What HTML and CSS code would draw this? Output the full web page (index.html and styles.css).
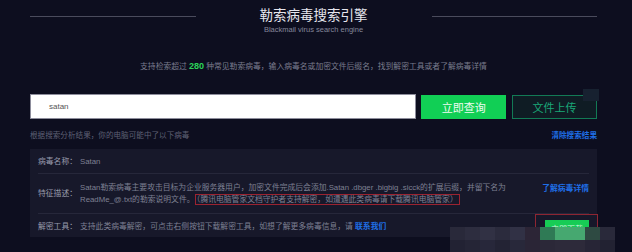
FILE: index.html
```html
<!DOCTYPE html>
<html lang="zh-CN">
<head>
    <meta charset="UTF-8">
    <title>勒索病毒搜索引擎</title>
    <link rel="stylesheet" href="styles.css">
</head>
<body>
    <div class="page">
        <div class="header">
            <div class="header-line"></div>
            <div class="header-title">
                <h1>勒索病毒搜索引擎</h1>
                <div class="subtitle">Blackmail virus search engine</div>
            </div>
            <div class="header-line"></div>
        </div>

        <p class="tagline">支持检索超过 <b class="count">280</b> 种常见勒索病毒，输入病毒名或加密文件后缀名，找到解密工具或者了解病毒详情</p>

        <div class="search-row">
            <div class="search-input">satan</div>
            <button class="btn btn-search">立即查询</button>
            <button class="btn btn-upload">文件上传<span class="corner"></span></button>
        </div>

        <div class="hint-row">
            <span>根据搜索分析结果，你的电脑可能中了以下病毒</span>
            <a class="link">清除搜索结果</a>
        </div>

        <div class="result">
            <div class="result-row">
                <span class="label">病毒名称：</span>
                <span class="value">Satan</span>
            </div>
            <div class="result-row row-desc">
                <span class="label">特征描述：</span>
                <span class="value desc">Satan勒索病毒主要攻击目标为企业服务器用户，加密文件完成后会添加.Satan .dbger .bigbig .sicck的扩展后缀，并留下名为ReadMe_@.txt的勒索说明文件。<span class="mark">（腾讯电脑管家文档守护者支持解密，如遭遇此类病毒请下载腾讯电脑管家）</span></span>
                <a class="link detail-link">了解病毒详情</a>
            </div>
            <div class="result-row row-tool">
                <span class="label">解密工具：</span>
                <span class="value">支持此类病毒解密，可点击右侧按钮下载解密工具，如想了解更多病毒信息，请 <a class="link">联系我们</a></span>
                <div class="download-box"><div class="btn-download">立即下载</div></div>
            </div>
        </div>
    </div>

    <div class="mosaic">
        <i style="background:#29293a"></i><i style="background:#2d2d3f"></i><i style="background:#313144"></i><i style="background:#2b2b3d"></i><i style="background:#313145"></i><i style="background:#2c2536"></i><i style="background:#2f7a55"></i><i style="background:#46a870"></i><i style="background:#46a870"></i><i style="background:#2e4a42"></i><i style="background:#29293a"></i>
        <i style="background:#222233"></i><i style="background:#252536"></i><i style="background:#27273a"></i><i style="background:#232334"></i><i style="background:#28283a"></i><i style="background:#2a2536"></i><i style="background:#2b2838"></i><i style="background:#2d2a3a"></i><i style="background:#2d2a3a"></i><i style="background:#272536"></i><i style="background:#222232"></i>
    </div>
</body>
</html>
```

FILE: styles.css
```css
body {
    margin: 0;
    background-color: #0d0e1f;
    font-family: 'Liberation Sans', 'Noto Sans CJK SC', sans-serif;
    color: #7c7e90;
    position: relative;
    width: 632px;
    height: 252px;
    overflow: hidden;
}
.page {
    width: 567px;
    padding: 0 35px 0 30px;
}
.header {
    display: flex;
    align-items: flex-start;
    padding-top: 7px;
}
.header-line {
    flex: 1;
    height: 1px;
    background-color: #4a4b5c;
    margin-top: 9px;
}
.header-title {
    width: 110px;
    margin: 0 63px;
    text-align: center;
}
h1 {
    margin: 0;
    font-size: 13.5px;
    line-height: 18px;
    font-weight: normal;
    color: #e6e6ee;
}
.subtitle {
    font-size: 7.5px;
    line-height: 10px;
    color: #85879a;
}
.tagline {
    margin: 25px 0 0;
    text-align: center;
    font-size: 7.8px;
    line-height: 12px;
    color: #7a7c8e;
}
.count {
    color: #2bd45a;
    font-size: 9px;
}
.search-row {
    display: flex;
    margin-top: 21px;
    height: 25px;
}
.search-input {
    width: 367px;
    padding-left: 18px;
    background-color: #fff;
    border: 1px solid #8d8d9c;
    font-size: 8px;
    line-height: 23px;
    color: #555;
}
.btn {
    font-family: inherit;
    border: none;
    padding: 0;
    cursor: pointer;
}
.btn-search {
    width: 85px;
    margin-left: 5px;
    margin-top: 1px;
    height: 24px;
    background-color: #11cf55;
    color: #eefbf1;
    font-size: 11px;
}
.btn-upload {
    position: relative;
    width: 85px;
    margin-left: 6px;
    margin-top: 1px;
    height: 24px;
    background-color: #0f1c24;
    border: 1px solid #127a55;
    color: #1aa878;
    font-size: 11px;
}
.corner {
    position: absolute;
    right: -3px;
    top: -7px;
    width: 16px;
    height: 12px;
    background-color: #172130;
}
.hint-row {
    display: flex;
    justify-content: space-between;
    margin-top: 11px;
    font-size: 7.6px;
    line-height: 12px;
    color: #5e6074;
}
.link {
    color: #1f6fe8;
    font-weight: bold;
}
.result {
    margin-top: 7px;
    background-color: #17182a;
    padding: 0 8px;
    height: 88px;
}
.result-row {
    display: flex;
    align-items: center;
    font-size: 7.8px;
    line-height: 12px;
    border-bottom: 1px solid #26273a;
    height: 23px;
    padding-top: 1px;
}
.row-desc {
    height: 38px;
}
.row-tool {
    border-bottom: none;
    height: 24px;
}
.label {
    width: 42px;
    flex-shrink: 0;
    color: #9a9cad;
}
.value {
    color: #7e8093;
    white-space: nowrap;
}
.desc {
    width: 440px;
    white-space: normal;
}
.mark {
    border: 1px solid #9b2331;
    padding: 0 1px;
    line-height: 10px;
}
.detail-link {
    margin-left: auto;
    align-self: flex-start;
    margin-top: 8px;
    flex-shrink: 0;
}
.download-box {
    flex-shrink: 0;
    margin-left: auto;
    margin-right: -9px;
    align-self: flex-start;
    margin-top: -1px;
    padding: 5px 8px 6px 9px;
    border: 1px solid #8e2532;
}
.btn-download {
    width: 44px;
    height: 19px;
    line-height: 19px;
    text-align: center;
    background-color: #17cc55;
    color: #d9f5e2;
    font-size: 8px;
    white-space: nowrap;
}
.mosaic {
    position: absolute;
    left: 450px;
    top: 227px;
    width: 173px;
    display: grid;
    grid-template-columns: repeat(11, 15px);
    grid-auto-rows: 12.5px;
    border-radius: 0 8px 8px 0;
    overflow: hidden;
}
.mosaic i {
    display: block;
}
```
